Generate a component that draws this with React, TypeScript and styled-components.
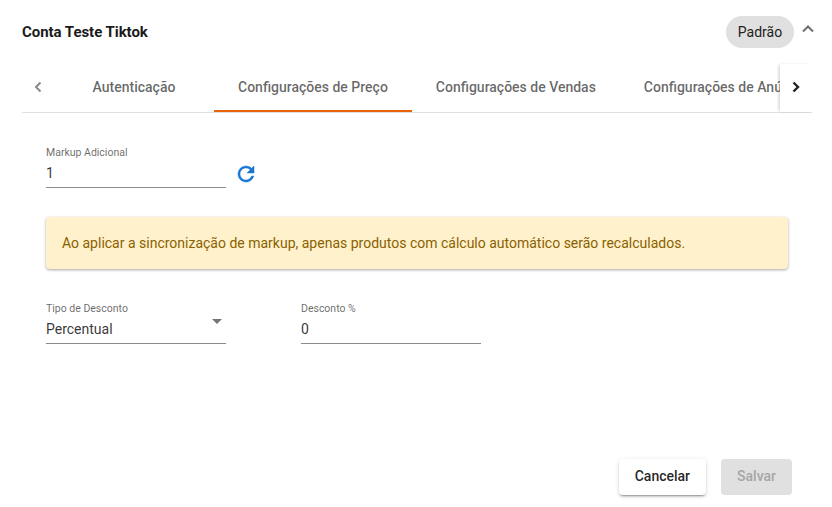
import { createGlobalStyle } from "styled-components";
import styled from "styled-components";

const GlobalStyle = createGlobalStyle`
  html, body {
    margin: 0;
    background: #fff;
  }
  * {
    box-sizing: border-box;
  }
  body {
    font-family: Roboto, "Liberation Sans", sans-serif;
  }
`;

const Page = styled.div`
  width: 832px;
  height: 507px;
  display: flex;
  flex-direction: column;
  padding: 16px 20px 12px 22px;
  overflow: hidden;
`;

const Header = styled.header`
  display: flex;
  align-items: center;
  height: 32px;
`;

const Title = styled.h2`
  flex: 1;
  margin: 0;
  font-size: 15px;
  font-weight: 700;
  letter-spacing: -0.05px;
  color: #1b1b1b;
`;

const Chip = styled.span`
  width: 68px;
  height: 32px;
  border-radius: 16px;
  background: #e0e0e0;
  display: flex;
  align-items: center;
  justify-content: center;
  font-size: 14px;
  color: #212121;
`;

const Collapse = styled.span`
  width: 28px;
  display: flex;
  justify-content: center;
  margin: -6px -10px 0 0;
`;

const Tabs = styled.nav`
  display: flex;
  height: 51px;
  margin-top: 14px;
  border-bottom: 1px solid #e0e0e0;
`;

const ScrollButton = styled.span<{ $edge?: boolean }>`
  flex: 0 0 32px;
  display: flex;
  align-items: center;
  justify-content: center;
  position: relative;
  box-shadow: ${(p) => (p.$edge ? "-2px 0 3px -1px rgba(0,0,0,.2)" : "none")};
  background: #fff;
  margin-top: ${(p) => (p.$edge ? "2px" : "0")};
  padding-bottom: ${(p) => (p.$edge ? "3px" : "1px")};
`;

const TabList = styled.div`
  flex: 1;
  display: flex;
  overflow: hidden;
  white-space: nowrap;
`;

const Tab = styled.span<{ $active?: boolean }>`
  flex: 0 0 auto;
  min-width: 160px;
  padding: 1px 24px 0;
  display: flex;
  align-items: center;
  justify-content: center;
  font-size: 14px;
  font-weight: 500;
  color: rgba(0, 0, 0, 0.6);
  border-bottom: 2px solid ${(p) => (p.$active ? "#e8630a" : "transparent")};
`;

const Content = styled.section`
  flex: 1;
  display: flex;
  flex-direction: column;
  padding: 33px 20px 0 24px;
`;

const FieldRow = styled.div`
  display: flex;
  align-items: flex-end;
  gap: 75px;
`;

const MarkupRow = styled(FieldRow)`
  gap: 8px;
`;

const Field = styled.label`
  width: 180px;
  height: 42px;
  display: flex;
  flex-direction: column;
  position: relative;
  border-bottom: 1px solid #8c8c8c;
`;

const FieldLabel = styled.span`
  font-size: 10.5px;
  line-height: 14px;
  color: rgba(0, 0, 0, 0.6);
`;

const FieldValue = styled.span`
  margin-top: 3px;
  font-size: 14px;
  line-height: 20px;
  color: rgba(0, 0, 0, 0.8);
`;

const Arrow = styled.span`
  position: absolute;
  right: 4px;
  top: 17px;
  width: 0;
  height: 0;
  border-left: 5px solid transparent;
  border-right: 5px solid transparent;
  border-top: 5px solid #757575;
`;

const RefreshButton = styled.span`
  width: 24px;
  height: 24px;
  display: flex;
  margin-bottom: 2px;
`;

const Alert = styled.div`
  height: 52px;
  margin: 29px 0 33px;
  padding: 0 16px;
  display: flex;
  align-items: center;
  width: 742px;
  border-radius: 4px;
  background: #fff1cc;
  color: #8a6100;
  font-size: 14px;
  box-shadow: 0 1px 3px rgba(0, 0, 0, 0.35);
`;

const Actions = styled.footer`
  display: flex;
  justify-content: flex-end;
  gap: 15px;
  height: 36px;
`;

const Button = styled.button<{ $disabled?: boolean }>`
  height: 36px;
  padding: 0 16px 2px;
  border: 0;
  border-radius: 4px;
  font-family: inherit;
  font-size: 14px;
  font-weight: 500;
  background: ${(p) => (p.$disabled ? "#e0e0e0" : "#fff")};
  color: ${(p) => (p.$disabled ? "#a6a6a6" : "rgba(0, 0, 0, 0.87)")};
  box-shadow: ${(p) =>
    p.$disabled
      ? "none"
      : "0 3px 1px -2px rgba(0,0,0,.2), 0 2px 2px 0 rgba(0,0,0,.14), 0 1px 5px 0 rgba(0,0,0,.12)"};
`;

const Spacer = styled.div`
  flex: 1;
`;

const Chevron = ({ d, color, w = 2 }: { d: string; color: string; w?: number }) => (
  <svg width="14" height="14" viewBox="0 0 14 14" fill="none">
    <path d={d} stroke={color} strokeWidth={w} />
  </svg>
);

const App = () => (
  <Page>
    <GlobalStyle />
    <Header>
      <Title>Conta Teste Tiktok</Title>
      <Chip>Padrão</Chip>
      <Collapse>
        <Chevron d="M2 9.5 7 4.5 12 9.5" color="#6e6e6e" />
      </Collapse>
    </Header>
    <Tabs>
      <ScrollButton>
        <Chevron d="M9.5 2.5 5 7 9.5 11.5" color="#8a8a8a" />
      </ScrollButton>
      <TabList>
        <Tab>Autenticação</Tab>
        <Tab $active>Configurações de Preço</Tab>
        <Tab>Configurações de Vendas</Tab>
        <Tab>Configurações de Anúncios</Tab>
      </TabList>
      <ScrollButton $edge>
        <Chevron d="M4.5 2.5 9 7 4.5 11.5" color="#222" w={2.4} />
      </ScrollButton>
    </Tabs>
    <Content>
      <MarkupRow>
        <Field>
          <FieldLabel>Markup Adicional</FieldLabel>
          <FieldValue>1</FieldValue>
        </Field>
        <RefreshButton>
          <svg width="24" height="24" viewBox="0 0 24 24" fill="#1976d2" stroke="#1976d2" strokeWidth="0.5">
            <path d="M17.65 6.35C16.2 4.9 14.21 4 12 4c-4.42 0-7.99 3.58-7.99 8s3.57 8 7.99 8c3.73 0 6.84-2.55 7.73-6h-2.08c-.82 2.33-3.04 4-5.65 4-3.31 0-6-2.69-6-6s2.69-6 6-6c1.66 0 3.14.69 4.22 1.78L13 11h7V4l-2.35 2.35z" />
          </svg>
        </RefreshButton>
      </MarkupRow>
      <Alert>Ao aplicar a sincronização de markup, apenas produtos com cálculo automático serão recalculados.</Alert>
      <FieldRow>
        <Field>
          <FieldLabel>Tipo de Desconto</FieldLabel>
          <FieldValue>Percentual</FieldValue>
          <Arrow />
        </Field>
        <Field>
          <FieldLabel>Desconto %</FieldLabel>
          <FieldValue>0</FieldValue>
        </Field>
      </FieldRow>
      <Spacer />
      <Actions>
        <Button>Cancelar</Button>
        <Button $disabled>Salvar</Button>
      </Actions>
    </Content>
  </Page>
);

export default App;
